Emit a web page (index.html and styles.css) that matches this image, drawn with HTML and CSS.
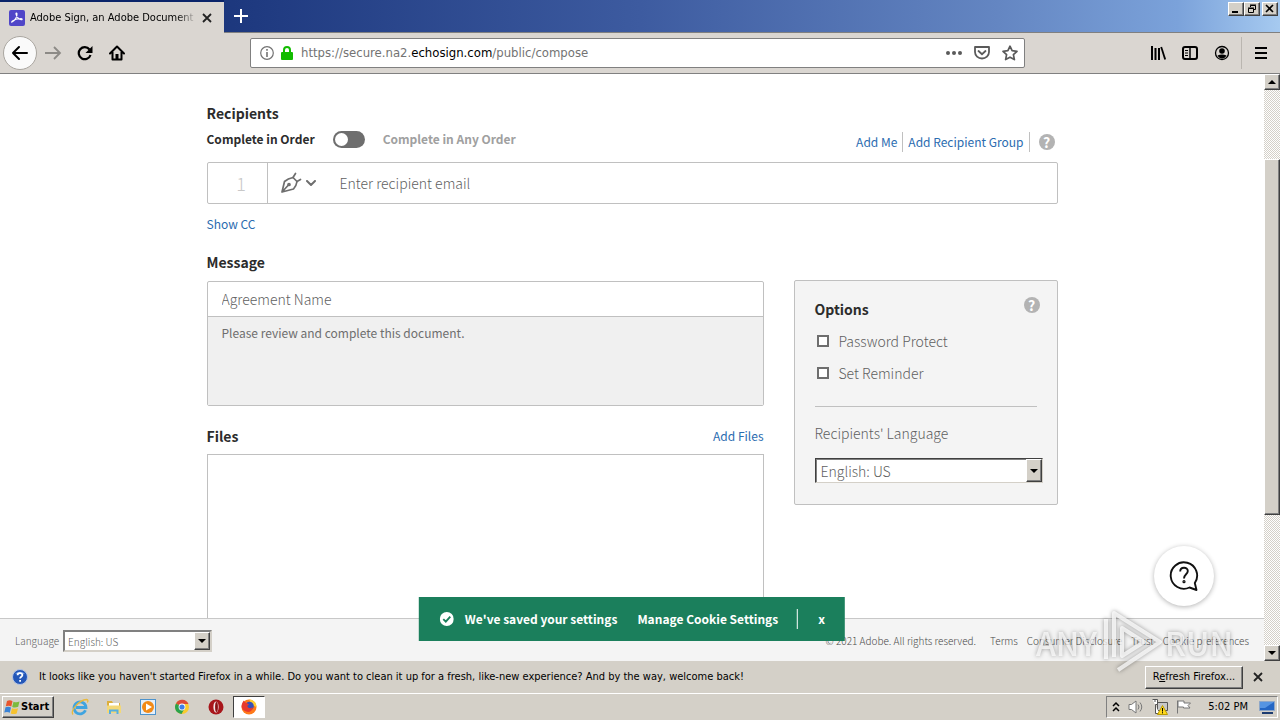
FILE: index.html
```html
<!DOCTYPE html>
<html lang="en">
<head>
<meta charset="UTF-8">
<title>Adobe Sign, an Adobe Document Cloud solution</title>
<link rel="stylesheet" href="styles.css">
</head>
<body>
  <header class="titlebar">
    <div class="tab">
      <svg class="tab-icon" viewBox="0 0 16 16"><rect width="16" height="16" rx="2" fill="#5046c8"/><path d="M3 12c2.500-1.300 5.500-5 5-8.300-.2-1.200-1.300-.9-1 .4.500 2.800 3 5.400 5.300 5.700 1.500 0 .9-1.500-.8-1.300C8.300 8.600 5 9.800 3.500 11c-1.200 1-.9 1.500-.5 1z" fill="none" stroke="#fff" stroke-width="1.100"/></svg>
      <span class="tab-title">Adobe Sign, an Adobe Document Cloud</span>
      <button class="icon-btn" aria-label="Close tab"><svg width="10" height="10" viewBox="0 0 10 10"><path d="M1 1l8 8M9 1l-8 8" stroke="#222" stroke-width="1.800"/></svg></button>
    </div>
    <button class="icon-btn new-tab" aria-label="New tab"><svg width="14" height="14" viewBox="0 0 14 14"><path d="M7 0v14M0 7h14" stroke="#fff" stroke-width="2"/></svg></button>
    <div class="window-buttons">
      <button aria-label="Minimize"><svg width="12" height="10" viewBox="0 0 12 10"><path d="M2 8h6" stroke="#000" stroke-width="2"/></svg></button>
      <button aria-label="Restore"><svg width="12" height="10" viewBox="0 0 12 10"><path d="M4.500 3V1.500h5v4H8M4 1h6M2.500 4.500h5v4h-5zM2 4h6" fill="none" stroke="#000"/></svg></button>
      <button class="close" aria-label="Close"><svg width="12" height="10" viewBox="0 0 12 10"><path d="M2 1l7 7M9 1L2 8" stroke="#000" stroke-width="1.600"/></svg></button>
    </div>
  </header>

  <nav class="navbar">
    <div class="nav-buttons">
      <button class="icon-btn back" aria-label="Back"><svg width="18" height="16" viewBox="0 0 18 16"><path d="M8 2L2 8l6 6M2 8h14" fill="none" stroke="#000" stroke-width="2" stroke-linecap="round" stroke-linejoin="round"/></svg></button>
      <button class="icon-btn" aria-label="Forward"><svg width="18" height="16" viewBox="0 0 18 16"><path d="M10 2l6 6-6 6M16 8H1" fill="none" stroke="#8c8a86" stroke-width="1.800"/></svg></button>
      <button class="icon-btn" aria-label="Reload"><svg width="16" height="16" viewBox="0 0 16 16"><path d="M12.500 4.500A6 6 0 1 0 13.500 10" fill="none" stroke="#000" stroke-width="2.200"/><path d="M15.500 1v7H8.500z"/></svg></button>
      <button class="icon-btn" aria-label="Home"><svg width="16" height="16" viewBox="0 0 16 16"><path d="M1 8.500l7-7 7 7M3.500 7v7.500h9V7" fill="none" stroke="#000" stroke-width="2" stroke-linecap="round" stroke-linejoin="round"/><path d="M6.500 9h3v6h-3z"/></svg></button>
    </div>
    <div class="urlbar">
      <svg width="14" height="14" viewBox="0 0 14 14"><circle cx="7" cy="7" r="6.300" fill="none" stroke="#737373" stroke-width="1.200"/><path d="M7 6v5M7 3v1.700" stroke="#737373" stroke-width="1.600"/></svg>
      <svg width="12" height="14" viewBox="0 0 12 14"><path d="M3 7V4a3 3 0 0 1 6 0v3" fill="none" stroke="#12bc00" stroke-width="2"/><rect y="6" width="12" height="8" rx="1" fill="#12bc00"/></svg>
      <div class="url">https://secure.na2.<b>echosign.com</b>/public/compose</div>
      <svg width="16" height="16" viewBox="0 0 16 16" fill="#5a5a5a"><circle cx="2" cy="8" r="2"/><circle cx="8" cy="8" r="2"/><circle cx="14" cy="8" r="2"/></svg>
      <svg width="16" height="16" viewBox="0 0 16 16" fill="none" stroke="#5a5a5a" stroke-width="1.800"><path d="M1 2h14v5a7 6.500 0 0 1-14 0z" stroke-linejoin="round"/><path d="M4.500 6L8 9.200 11.500 6" stroke-linecap="round"/></svg>
      <svg width="16" height="16" viewBox="0 0 16 16"><path d="M8 1.200l2.100 4.500 4.900.6-3.600 3.400 1 4.900L8 12.200l-4.400 2.400 1-4.900L1 6.300l4.900-.6z" fill="none" stroke="#5a5a5a" stroke-width="1.700" stroke-linejoin="round"/></svg>
    </div>
    <div class="tools">
      <button class="icon-btn" aria-label="Library"><svg width="16" height="16" viewBox="0 0 16 16"><path d="M2 1v14M5.500 3v12M9 3v12" stroke="#000" stroke-width="2"/><path d="M11.200 2l4 12.500" stroke="#000" stroke-width="1.800"/></svg></button>
      <button class="icon-btn" aria-label="Sidebars"><svg width="16" height="16" viewBox="0 0 16 16"><rect x="1" y="2" width="14" height="12" rx="2" fill="none" stroke="#000" stroke-width="2"/><path d="M8 2v12" stroke="#000" stroke-width="1.500"/><path d="M3 5.500h3M3 8h3M3 10.500h3" stroke="#000"/></svg></button>
      <button class="icon-btn" aria-label="Account"><svg width="16" height="16" viewBox="0 0 16 16"><circle cx="8" cy="8" r="6.500" fill="none" stroke="#000" stroke-width="1.300"/><circle cx="8" cy="6" r="2.800"/><path d="M3.500 10.500Q8 8.500 12.500 10.500Q11 13.500 8 13.500T3.500 10.500z"/></svg></button>
      <button class="icon-btn menu" aria-label="Menu"><svg width="14" height="14" viewBox="0 0 14 14"><path d="M1 2h12M1 7h12M1 12h12" stroke="#000" stroke-width="2"/></svg></button>
    </div>
  </nav>

  <div class="viewport">
    <div class="page">
      <main class="content">
        <form class="form">
          <section class="recipients">
            <h2>Recipients</h2>
            <div class="order-row">
              <label class="order" for="any-order">Complete in Order</label>
              <input class="switch" type="checkbox" id="any-order">
              <span class="order off">Complete in Any Order</span>
              <div class="recipient-links">
                <a href="#">Add Me</a>
                <a href="#">Add Recipient Group</a>
                <button type="button" class="help" aria-label="Help">?</button>
              </div>
            </div>
            <div class="recipient">
              <span class="number">1</span>
              <button type="button" class="role" aria-label="Role">
                <svg width="22" height="22" viewBox="0 0 22 22" fill="none" stroke="#6e6e6e" stroke-width="1.700" stroke-linejoin="round" stroke-linecap="round"><path d="M2 20l2.500-10.500Q8 6.500 13 5.500l4 4q-.5 4-3.500 7.500zM2 20l6-6.500"/><path d="M13 5.500L15.500 1.500M17 9.500l3.500-2"/><circle cx="9" cy="12.500" r="1"/></svg>
                <svg width="10" height="6" viewBox="0 0 10 6"><path d="M1 1l4 4 4-4" fill="none" stroke="#6e6e6e" stroke-width="2" stroke-linecap="round"/></svg>
              </button>
              <input type="email" class="email" placeholder="Enter recipient email" aria-label="Recipient email">
            </div>
            <a class="show-cc" href="#">Show CC</a>
          </section>
          <div class="columns">
            <div class="left">
              <h2>Message</h2>
              <div class="message">
                <input type="text" placeholder="Agreement Name" aria-label="Agreement Name">
                <textarea aria-label="Message">Please review and complete this document.</textarea>
              </div>
              <div class="files-head">
                <h2>Files</h2>
                <a href="#">Add Files</a>
              </div>
              <div class="files"></div>
            </div>
            <aside class="options">
              <div class="options-head">
                <h2>Options</h2>
                <button type="button" class="help" aria-label="Help">?</button>
              </div>
              <label class="check"><input type="checkbox">Password Protect</label>
              <label class="check"><input type="checkbox">Set Reminder</label>
              <hr>
              <label class="lang-label" for="recipient-lang">Recipients' Language</label>
              <div class="dropdown">
                <select id="recipient-lang"><option>English: US</option></select>
                <span class="arrow down"></span>
              </div>
            </aside>
          </div>
        </form>
      </main>

      <footer class="footer">
        <label for="site-lang">Language</label>
        <div class="dropdown small">
          <select id="site-lang"><option>English: US</option></select>
          <span class="arrow down"></span>
        </div>
        <div class="legal">
          <span>© 2021 Adobe. All rights reserved.</span>
          <a href="#">Terms</a>
          <a href="#">Consumer Disclosure</a>
          <a href="#">Trust</a>
          <a href="#">Cookie preferences</a>
        </div>
      </footer>

      <div class="cookie">
        <svg width="14" height="14" viewBox="0 0 14 14"><circle cx="7" cy="7" r="7" fill="#fff"/><path d="M3.500 7.200L6 9.700l4.500-5" fill="none" stroke="#1b7f5c" stroke-width="1.900"/></svg>
        <span>We've saved your settings</span>
        <a href="#">Manage Cookie Settings</a>
        <button class="dismiss" aria-label="Dismiss">x</button>
      </div>

      <button class="chat" aria-label="Help chat">
        <svg width="32" height="32" viewBox="0 0 32 32" fill="none" stroke="#111" stroke-width="1.900"><path d="M28.500 30l-7-2.500A13.200 13.200 0 1 1 26.800 23z" stroke-linejoin="round"/><path d="M12.200 11.500c0-5 7.600-4.800 7.600-.5 0 3.200-3.800 3.400-3.800 7.500"/><circle cx="16" cy="21.700" r="1" stroke-width="1.200"/></svg>
      </button>

      <div class="watermark">
        <span>ANY</span>
        <svg width="62" height="66" viewBox="0 0 62 66" fill="none" stroke="#fff" stroke-opacity=".75" stroke-width="4" stroke-linejoin="round"><path d="M6 50V10"/><path d="M14 48V4l46 29-42 28"/><path d="M22 47V19l22 14z"/></svg>
        <span>RUN</span>
      </div>
    </div>
    <div class="scrollbar">
      <span class="arrow up"></span>
      <div class="track"><div class="thumb"></div></div>
      <span class="arrow down"></span>
    </div>
  </div>

  <div class="notification">
    <svg width="16" height="16" viewBox="0 0 16 16"><circle cx="8" cy="8" r="7.500" fill="#2457b8" stroke="#b4c4e4"/><path d="M3 5a6 5 0 0 1 10 0z" fill="#6f9be6"/><path d="M5.600 6.300c0-3 4.800-2.800 4.800-.2 0 1.700-2.300 1.700-2.300 3.500M8.100 11v1.700" fill="none" stroke="#fff" stroke-width="1.800"/></svg>
    <p>It looks like you haven't started Firefox in a while. Do you want to clean it up for a fresh, like-new experience? And by the way, welcome back!</p>
    <button class="refresh">R<u>e</u>fresh Firefox...</button>
    <button class="icon-btn" aria-label="Close"><svg width="10" height="10" viewBox="0 0 10 10"><path d="M1 1l8 8M9 1l-8 8" stroke="#222" stroke-width="1.800"/></svg></button>
  </div>

  <div class="taskbar">
    <button class="start">
      <svg width="16" height="16" viewBox="0 0 16 16"><path d="M3 2q3-1.500 5.500.2L7.300 7.500Q5 6 1.800 7.200z" fill="#e8552d"/><path d="M9.500 2.800q3 1.200 6-.3l-1.300 5.200q-3 1.300-6 .2z" fill="#7cba3d"/><path d="M1.500 8.300q3-1.200 5.500.3l-1.200 5.200Q3.500 12.300.3 13.500z" fill="#3a83d6"/><path d="M8 9.300q3 1.100 6 0l-1.300 5.100q-3 1.300-6 .1z" fill="#f6c22f"/></svg>
      Start
    </button>
    <div class="apps">
      <button aria-label="Internet Explorer"><svg width="18" height="18" viewBox="0 0 18 18"><path d="M14.500 12.300A6 6 0 1 1 15 9.500H5" fill="none" stroke="#3fa4e0" stroke-width="2.800"/><path d="M2 16.500C-1 13 8 2 15.500 1.500c2 0 1.500 2 .8 3" fill="none" stroke="#e9b93c" stroke-width="1.300"/></svg></button>
      <button aria-label="Explorer"><svg width="18" height="18" viewBox="0 0 18 18"><path d="M2 3h5l1 2h7v9H2z" fill="#dcae3c"/><path d="M4 5h10v3H4z" fill="#fff"/><path d="M2 7.500h14V15H2z" fill="#f3d878"/><path d="M4 16v-4.500h9.500V16h-2v-2.500H6V16z" fill="#56aee0"/></svg></button>
      <button aria-label="Media Player"><svg width="18" height="18" viewBox="0 0 18 18"><rect x="1.500" y="1.500" width="15" height="15" fill="#e5effa" stroke="#4d93cc"/><circle cx="9" cy="9" r="6" fill="#f28a17"/><path d="M7 5.500v7L13 9z" fill="#fff"/></svg></button>
      <button aria-label="Chrome"><svg width="18" height="18" viewBox="0 0 18 18"><circle cx="9" cy="9" r="7" fill="#f9cb2e"/><path d="M9 9L3 5.400A7 7 0 0 1 15.500 6H9z" fill="#dd4b39"/><path d="M3 5.400A7 7 0 0 0 8.500 16l3-5.300L9 9z" fill="#2ba24c"/><circle cx="9" cy="9" r="3.400" fill="#fff"/><circle cx="9" cy="9" r="2.600" fill="#3f7fe8"/></svg></button>
      <button aria-label="Opera"><svg width="18" height="18" viewBox="0 0 18 18"><circle cx="9" cy="9" r="7.500" fill="#a8161b"/><ellipse cx="9" cy="9" rx="2.600" ry="5.500" fill="#f4e6e6"/><ellipse cx="9.500" cy="9" rx="1.400" ry="5" fill="#8a1014"/></svg></button>
      <button class="active" aria-label="Firefox"><svg width="18" height="18" viewBox="0 0 18 18"><circle cx="9" cy="9" r="7.500" fill="#ff7a1a"/><path d="M9 1.500c4 0 7.500 3 7.500 7.500L12 7z" fill="#ffcf33"/><circle cx="9.500" cy="8" r="4.300" fill="#3650b8"/><path d="M1.500 8C2 5 3 3.500 4 2.500 4.500 5 8 5 9 7c-2 0-2 2-.5 2.700 2 1 3.500 0 4.500-.5-.5 4-4 5.500-7 4.300C3 12.500 1.500 10 1.500 8z" fill="#e8392e"/></svg></button>
    </div>
    <div class="tray">
      <svg width="8" height="12" viewBox="0 0 8 12"><path d="M1 5l3-3 3 3M1 10l3-3 3 3" fill="none" stroke="#000" stroke-width="1.500"/></svg>
      <svg width="16" height="16" viewBox="0 0 16 16" fill="#fff" stroke="#777"><path d="M1 5.500h2.500L8 2v12l-4.500-3.500H1z"/><path d="M10 5.500q2 2.500 0 5M12 3.500q3.500 4.500 0 9" fill="none"/></svg>
      <svg width="16" height="16" viewBox="0 0 16 16"><path d="M5.500 3.500h10v8h-10z" fill="#c8c8c8" stroke="#555"/><path d="M.5.500h5v5h-2v9h4" fill="#fff" stroke="#555"/><path d="M3 0v3" stroke="#555"/><path d="M10.500 6.500l5 9h-10z" fill="#ffd91c" stroke="#b99a00"/><path d="M10.500 9v3.500M10.500 13.200v1.200" stroke="#000"/></svg>
      <svg width="16" height="16" viewBox="0 0 16 16" fill="#fff" stroke="#777"><path d="M1.500 1.500v13M2 2h6v2h6.500L12 6.500 14 9H7.500V8H2z"/></svg>
      <time>5:02 PM</time>
      <svg width="16" height="14" viewBox="0 0 16 14"><path d="M.5 1.500h15v9H.5z" fill="#2466c4" stroke="#8ea7c8"/><path d="M1 2h14L6 8H1z" fill="#5594e2"/><path d="M3 13h11" stroke="#1d3c70" stroke-width="2"/></svg>
    </div>
  </div>
</body>
</html>
```
FILE: styles.css
```css
* {
  box-sizing: border-box;
  margin: 0;
  padding: 0;
}

body {
  display: flex;
  flex-direction: column;
  height: 100vh;
  overflow: hidden;
  background: #d4d0c8;
  color: #000;
  font: 11px/16px "DejaVu Sans Condensed", Tahoma, sans-serif;
}

button, input, select, textarea {
  font: inherit;
  color: inherit;
  background: none;
  border: none;
  border-radius: 0;
  outline: none;
}

a {
  text-decoration: none;
}

svg {
  display: block;
  flex: none;
}

.icon-btn {
  display: flex;
  align-items: center;
  justify-content: center;
}

/* browser chrome */

.titlebar {
  display: flex;
  height: 33px;
  background: linear-gradient(90deg, #0a246a, #1f3a80 20%, #3d5ba0 50%, #6486c2 78%, #7ba2da 92%, #a6caf0);
  border-bottom: 1px solid #808080;
}

.tab {
  display: flex;
  align-items: center;
  gap: 5px;
  width: 224px;
  height: 33px;
  padding: 0 12px 0 9px;
  background: #dad6d1;
  border-top: 2px solid #0a246a;
}

.tab-icon {
  width: 16px;
  height: 16px;
}

.tab-title {
  flex: 1;
  overflow: hidden;
  white-space: nowrap;
  -webkit-mask-image: linear-gradient(90deg, #000 88%, transparent);
  mask-image: linear-gradient(90deg, #000 88%, transparent);
}

.new-tab {
  width: 34px;
}

.window-buttons {
  display: flex;
  align-items: flex-start;
  margin-left: auto;
  padding: 2px 2px 0 0;
}

.window-buttons button, .arrow, .thumb, .refresh, .start {
  background: #d4d0c8;
  border: 1px solid;
  border-color: #fff #404040 #404040 #fff;
  box-shadow: inset -1px -1px #808080;
}

.window-buttons button {
  width: 16px;
  height: 14px;
  padding: 1px;
}

.window-buttons .close {
  margin-left: 2px;
}

.navbar {
  display: flex;
  align-items: center;
  height: 41px;
  padding: 0 11px 0 3px;
  background: #dad6d1;
  border-bottom: 1px solid #808080;
}

.nav-buttons {
  display: flex;
  align-items: center;
  width: 247px;
}

.nav-buttons .icon-btn {
  width: 32px;
  height: 34px;
}

.nav-buttons .back {
  width: 34px;
  background: #fafafa;
  border: 1px solid #aaa6a0;
  border-radius: 50%;
}

.urlbar {
  display: flex;
  align-items: center;
  gap: 8px;
  flex: 1;
  max-width: 775px;
  height: 30px;
  padding: 0 6px 0 9px;
  background: #fff;
  border: 1px solid #808080;
  border-radius: 2px;
}

.urlbar svg + svg {
  margin-left: 4px;
}

.urlbar svg:nth-child(2) {
  margin-left: -1px;
}

.url {
  flex: 1;
  color: #737373;
  font-size: 13px;
}

.url b {
  color: #000;
  font-weight: normal;
}

.tools {
  display: flex;
  align-items: center;
  margin-left: auto;
}

.tools .icon-btn {
  width: 32px;
  height: 32px;
}

.tools .menu {
  width: 28px;
  margin-left: 3px;
  padding-left: 10px;
  border-left: 1px solid #bab6b0;
}

/* page */

.viewport {
  display: flex;
  flex: 1;
  min-height: 0;
  background: #fff;
}

.page {
  position: relative;
  display: flex;
  flex: 1;
  flex-direction: column;
  min-width: 0;
  color: #5f5f5f;
  font: 300 14px/20px "Noto Sans CJK SC", sans-serif;
}

.content {
  flex: 1;
  min-height: 0;
  padding-top: 29px;
  overflow: hidden;
}

.form {
  max-width: 851px;
  margin: 0 auto;
}

.page h2 {
  color: #2c2c2c;
  font-size: 14px;
  font-weight: bold;
  line-height: 20px;
}

.page a {
  color: #2b6cb0;
  font-size: 12px;
  font-weight: normal;
}

.order-row {
  display: flex;
  align-items: center;
  gap: 18px;
  padding: 3px 0 10px;
}

.order {
  color: #2c2c2c;
  font-size: 12px;
  font-weight: bold;
}

.off {
  color: #a0a0a0;
}

.switch {
  width: 32px;
  height: 17px;
  padding: 2px;
  background: #6e6e6e;
  border-radius: 9px;
  appearance: none;
}

.switch::before {
  content: "";
  display: block;
  width: 13px;
  height: 13px;
  background: #fff;
  border-radius: 50%;
}

.recipient-links {
  display: flex;
  align-items: center;
  margin-left: auto;
  padding: 6px 3px 0 0;
}

.recipient-links a {
  padding: 0 5px;
  border-right: 1px solid #c0c0c0;
}

.help {
  width: 16px;
  height: 16px;
  background: #b3b3b3;
  border-radius: 50%;
  color: #fff;
  font-size: 14px;
  font-weight: bold;
  line-height: 16px;
  text-align: center;
}

.recipient-links .help {
  margin-left: 9px;
}

.recipient {
  display: flex;
  height: 42px;
  border: 1px solid #c0c0c0;
  border-radius: 2px;
}

.number {
  width: 60px;
  padding-left: 8px;
  border-right: 1px solid #c0c0c0;
  color: #c8c8c8;
  font-size: 18px;
  line-height: 40px;
  text-align: center;
}

.role {
  display: flex;
  align-items: center;
  gap: 4px;
  padding: 0 12px;
}

.email {
  flex: 1;
  padding-left: 12px;
}

::placeholder {
  color: #5f5f5f;
}

.show-cc {
  display: block;
  margin-top: 10px;
}

.columns {
  display: flex;
  align-items: flex-start;
  gap: 30px;
  margin-top: 18px;
}

.left {
  flex: 1;
}

.message {
  display: flex;
  flex-direction: column;
  margin-top: 9px;
  border: 1px solid #c0c0c0;
  border-radius: 2px;
}

.message input {
  height: 35px;
  padding: 0 14px;
  border-bottom: 1px solid #c0c0c0;
}

.message textarea {
  height: 88px;
  padding: 6px 14px;
  background: #f0f0f0;
  color: #6e6e6e;
  font-size: 12px;
  font-weight: normal;
  resize: none;
}

.files-head {
  display: flex;
  justify-content: space-between;
  margin-top: 20px;
}

.files {
  height: 200px;
  margin-top: 8px;
  border: 1px solid #c0c0c0;
}

.options {
  width: 264px;
  margin-top: 28px;
  padding: 16px 20px 21px;
  background: #f4f4f4;
  border: 1px solid #c0c0c0;
  border-radius: 2px;
}

.options-head {
  display: flex;
  justify-content: space-between;
  margin-right: -3px;
}

.options-head h2 {
  padding-top: 2px;
}

.check {
  display: flex;
  align-items: center;
  gap: 10px;
  margin: 12px 0 12px 2px;
}

.check + .check {
  margin-bottom: 23px;
}

.check input {
  width: 12px;
  height: 12px;
  border: 2px solid #6e6e6e;
  background: #fff;
  appearance: none;
}

.options hr {
  border: none;
  border-top: 1px solid #c0c0c0;
}

.lang-label {
  display: block;
  margin: 16px 0 15px;
}

.dropdown {
  display: flex;
  height: 25px;
  margin-right: -6px;
  background: #fff;
  border: 1px solid;
  border-color: #404040 #d4d0c8 #d4d0c8 #404040;
  box-shadow: inset 1px 1px #808080;
}

.dropdown select {
  flex: 1;
  min-width: 0;
  padding-left: 5px;
  appearance: none;
}

.arrow {
  display: flex;
  flex: none;
  align-items: center;
  justify-content: center;
  width: 16px;
  height: 16px;
  pointer-events: none;
}

.arrow::before {
  content: "";
  border: 4px solid transparent;
}

.down::before {
  border-top-color: #000;
  border-bottom: none;
}

.up::before {
  border-bottom-color: #000;
  border-top: none;
}

.dropdown .arrow {
  height: auto;
}

.footer {
  display: flex;
  align-items: center;
  gap: 4px;
  height: 43px;
  padding: 2px 15px 0;
  background: #f4f4f4;
  border-top: 1px solid #c8c8c8;
  font-size: 10px;
}

.footer .small {
  width: 149px;
  height: 22px;
  margin-right: 0;
  border: 2px solid;
  border-color: #808080 #d4d0c8 #d4d0c8 #808080;
  box-shadow: none;
}

.footer .small select {
  padding-left: 3px;
}

.legal {
  display: flex;
  gap: 9px;
  margin-left: auto;
}

.legal span {
  margin-right: 5px;
}

.legal span, .page .legal a {
  color: #4b4b4b;
  font-size: 10px;
  font-weight: 300;
}

.cookie {
  position: absolute;
  bottom: 20px;
  left: 50%;
  display: flex;
  align-items: center;
  height: 44px;
  padding-left: 21px;
  background: #1b7f5c;
  color: #fff;
  font-size: 12px;
  font-weight: bold;
  white-space: nowrap;
  transform: translateX(-50%);
}

.cookie span {
  margin-left: 11px;
}

.page .cookie a {
  margin: 0 19px 0 20px;
  color: #fff;
  font-weight: bold;
}

.dismiss {
  width: 48px;
  height: 20px;
  border-left: 1px solid #fff;
}

.chat {
  position: absolute;
  right: 50px;
  bottom: 55px;
  display: flex;
  align-items: center;
  justify-content: center;
  width: 60px;
  height: 60px;
  background: #fff;
  border-radius: 50%;
  box-shadow: 0 1px 5px rgba(0, 0, 0, 0.3);
}

.watermark {
  position: absolute;
  right: 31px;
  bottom: -14px;
  display: flex;
  align-items: center;
  gap: 3px;
  color: rgba(255, 255, 255, 0.7);
  font-size: 32px;
  font-weight: 500;
  pointer-events: none;
  filter: drop-shadow(0 0 2px rgba(0, 0, 0, 0.5));
}

.scrollbar {
  display: flex;
  flex-direction: column;
  width: 16px;
}

.track {
  display: flex;
  flex: 1;
  flex-direction: column;
  background: repeating-conic-gradient(#fff 0 25%, #d4d0c8 0 50%) 0 0 / 2px 2px;
}

.track::before {
  content: "";
  flex: 69;
}

.track::after {
  content: "";
  flex: 130;
}

.thumb {
  flex: 356;
}

/* refresh prompt and taskbar */

.notification {
  display: flex;
  align-items: center;
  height: 32px;
  padding: 0 17px 0 12px;
}

.notification p {
  flex: 1;
  margin-left: 11px;
  white-space: nowrap;
}

.refresh {
  width: 98px;
  height: 23px;
  margin-right: 10px;
}

.taskbar {
  display: flex;
  align-items: center;
  height: 27px;
  padding: 0 2px;
  border-top: 1px solid #fff;
}

.start {
  display: flex;
  align-items: center;
  gap: 1px;
  width: 52px;
  height: 22px;
  padding-left: 1px;
  font-weight: bold;
}

.apps {
  display: flex;
  margin-left: 9px;
}

.apps button {
  display: flex;
  align-items: center;
  justify-content: center;
  width: 34px;
  height: 22px;
}

.apps .active {
  width: 32px;
  background: #fff;
  border: 1px solid;
  border-color: #404040 #fff #fff #404040;
}

.tray {
  display: flex;
  align-items: center;
  gap: 8px;
  height: 22px;
  margin-left: auto;
  padding: 0 2px 0 5px;
  border: 1px solid;
  border-color: #808080 #fff #fff #808080;
}

.tray time {
  margin: 0 3px 0 8px;
}
```
